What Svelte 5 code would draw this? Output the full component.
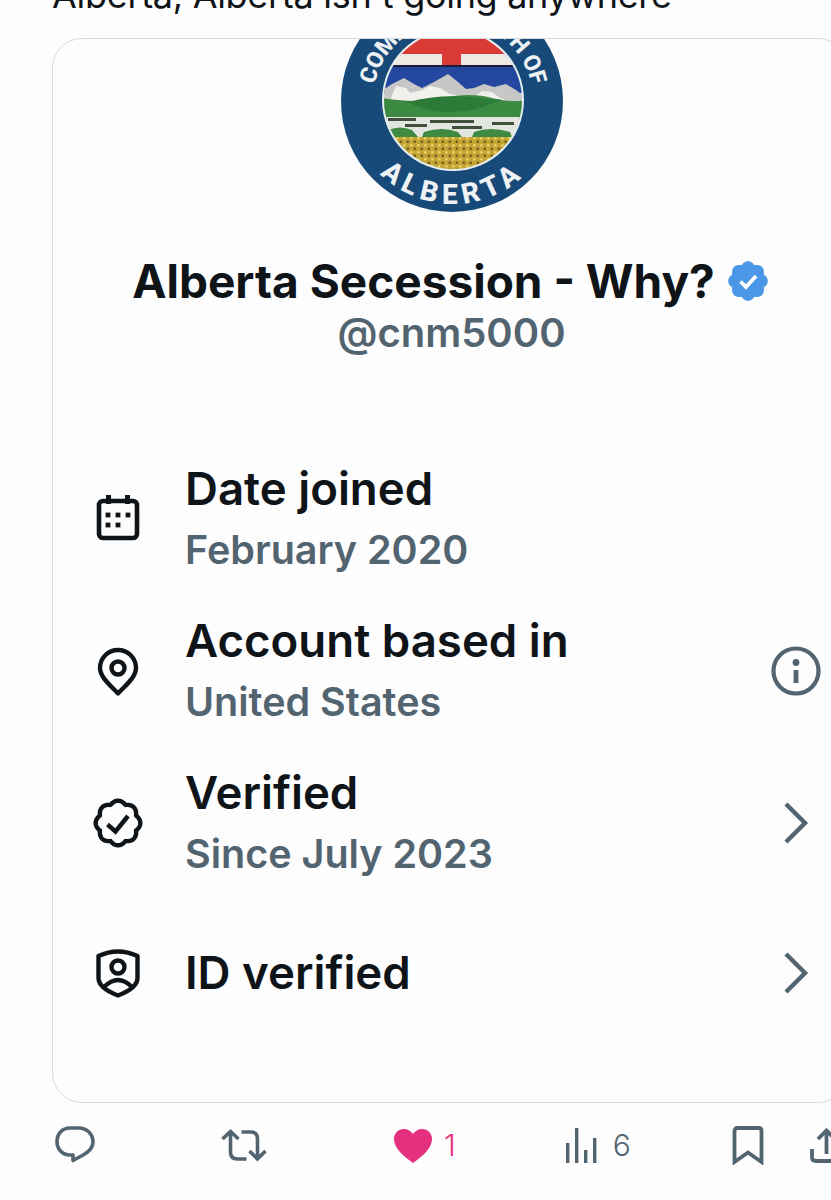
<script>
  function scallop(cx, cy, R, a, n) {
    const pts = [];
    for (let i = 0; i < 320; i++) {
      const t = (i / 320) * Math.PI * 2;
      const r = R + a * Math.abs(Math.cos((n / 2) * t));
      pts.push((cx + r * Math.sin(t)).toFixed(2) + ' ' + (cy - r * Math.cos(t)).toFixed(2));
    }
    return 'M' + pts.join('L') + 'Z';
  }
  const rows = [
    { icon: 'cal', title: 'Date joined', sub: 'February 2020' },
    { icon: 'pin', title: 'Account based in', sub: 'United States', end: 'info' },
    { icon: 'badge', title: 'Verified', sub: 'Since July 2023', end: 'chev' },
    { icon: 'shield', title: 'ID verified', end: 'chev' }
  ];
  const dots = [[-10, -4], [0, -4], [10, -4], [-10, 6], [0, 6]];
</script>

<div class="page">
  <p class="lead">Alberta, Alberta isn't going anywhere</p>

  <section class="card">
    <svg class="logo" width="224" height="224" viewBox="341 -11 224 224">
      <defs>
        <clipPath id="inner"><circle cx="453" cy="100" r="69" /></clipPath>
        <path id="topArc" d="M373 101a80 80 0 0 1 160 0" />
        <path id="botArc" d="M350 101a103 103 0 0 0 206 0" />
        <pattern id="field" width="7" height="7" patternUnits="userSpaceOnUse">
          <rect width="7" height="7" fill="#c4a534" />
          <circle cx="1.800" cy="1.800" r="1.300" fill="#6a5820" />
          <circle cx="5.300" cy="5.300" r="1.300" fill="#e8d66a" />
        </pattern>
      </defs>
      <circle cx="452" cy="101" r="111" fill="#174a78" />
      <circle cx="453" cy="100" r="71" fill="#e8eef0" />
      <g clip-path="url(#inner)">
        <rect x="380" y="28" width="146" height="28" fill="#d93a35" />
        <rect x="380" y="54" width="146" height="11" fill="#efeae4" />
        <rect x="442" y="28" width="19" height="37" fill="#d93a35" />
        <rect x="380" y="65" width="146" height="2" fill="#1c1c3c" />
        <rect x="380" y="67" width="146" height="26" fill="#24479f" />
        <path d="M380 92l12-8 12-6 10 6 8 4 12-6 14-8 10 8 8 7 8-1 10-4 10 3 12-3 10 6 8 6v14H380Z" fill="#c6c7c6" />
        <path d="M396 86l10 2 4 5 12-3 8-4 10 2 10 6 14 3 10 0 8-6 10 1 8 6 8 3-8 6H420l-30-4 2-8Z" fill="#f1f0ed" />
        <path d="M380 98q40 6 62 0 30-6 50 0 20 5 34 2v20H380Z" fill="#3c8a41" />
        <path d="M408 102q30-8 62-5 24 4 32 2-30 15-58 13-22-2-36-10Z" fill="#2c7a37" />
        <rect x="380" y="117" width="146" height="21" fill="#e3e6e0" />
        <path d="M388 118h28v3h-28ZM430 120h44v3h-44ZM405 124h22v3h-22ZM452 126h30v3h-30ZM492 122h22v3h-22Z" fill="#3f4f3a" />
        <path d="M388 130q12-5 24 0l6 7h-32ZM424 132q18-6 34 0l4 5h-40ZM474 132q16-6 36 0l2 5h-40Z" fill="#3f8a42" />
        <rect x="380" y="137" width="146" height="36" fill="url(#field)" />
      </g>
      <text class="seal top"><textPath href="#topArc" startOffset="50%" text-anchor="middle">COMMONWEALTH OF</textPath></text>
      <text class="seal bot"><textPath href="#botArc" startOffset="50%" text-anchor="middle">ALBERTA</textPath></text>
    </svg>

    <div class="name">
      <span>Alberta Secession - Why?</span>
      <svg width="40" height="40" viewBox="0 0 40 40">
        <path d={scallop(20, 20, 17, 2.800, 8)} fill="#4a97e8" />
        <path d="M12.500 20.500l5.500 5.500 10-11" fill="none" stroke="#fff" stroke-width="3.800" />
      </svg>
    </div>
    <div class="handle">@cnm5000</div>

    <ul class="rows">
      {#each rows as r}
        <li class="row">
          <span class="ico">
            {#if r.icon === 'cal'}
              <svg width="44" height="48" viewBox="-22 -24 44 48" fill="none" stroke="#0f1419" stroke-width="4.600">
                <rect x="-19" y="-18" width="38" height="37" rx="4" />
                <path d="M-9.500-24v9M9.500-24v9" stroke-width="5" />
                {#each dots as d}
                  <rect x={d[0] - 2.400} y={d[1] - 2.400} width="4.800" height="4.800" fill="#0f1419" stroke="none" />
                {/each}
              </svg>
            {:else if r.icon === 'pin'}
              <svg width="44" height="50" viewBox="-22 -25 44 50" fill="none" stroke="#0f1419" stroke-width="4.400">
                <path d="M0 22.500C-8 14-18 6-18-3a18 18 0 0 1 36 0C18 6 8 14 0 22.500Z" stroke-linejoin="round" />
                <circle cx="0" cy="-3" r="6.500" />
              </svg>
            {:else if r.icon === 'badge'}
              <svg width="52" height="52" viewBox="0 0 52 52" fill="none" stroke="#0f1419" stroke-width="4.400">
                <path d={scallop(26, 26, 19.500, 2.800, 8)} stroke-linejoin="round" />
                <path d="M15.500 27.500l8 7 12.500-15.500" />
              </svg>
            {:else}
              <svg width="46" height="50" viewBox="0 0 46 50" fill="none" stroke="#0f1419" stroke-width="4.400">
                <path d="M3.500 8Q23-1 42.500 8V30Q42.500 40 23 47.500 3.500 40 3.500 30Z" stroke-linejoin="round" />
                <circle cx="23" cy="19" r="6.500" />
                <path d="M9 39Q23 25 37 39" />
              </svg>
            {/if}
          </span>
          <span class="txt">
            <b>{r.title}</b>
            {#if r.sub}<em>{r.sub}</em>{/if}
          </span>
          {#if r.end === 'info'}
            <svg class="info" width="50" height="50" viewBox="0 0 50 50" fill="none" stroke="#536471" stroke-width="4.200">
              <circle cx="25" cy="25" r="22.500" />
              <circle cx="25" cy="16.500" r="3.400" fill="#536471" stroke="none" />
              <rect x="22.600" y="24" width="4.800" height="13" fill="#536471" stroke="none" />
            </svg>
          {:else if r.end === 'chev'}
            <svg class="chev" width="26" height="44" viewBox="0 0 26 44" fill="none" stroke="#536471" stroke-width="4.400">
              <path d="M3 3l19 19L3 41" />
            </svg>
          {/if}
        </li>
      {/each}
    </ul>
  </section>

  <div class="actions">
    <svg class="a-comment" width="40" height="38" viewBox="0 0 40 38" fill="none" stroke="#536471" stroke-width="3.600">
      <path d="M15 2h9a14 14 0 0 1 14 14c0 6-4 9.500-9 12.500L18 34.500V29h-3C7 29 2 23 2 15.500S7 2 15 2Z" stroke-linejoin="round" />
    </svg>
    <svg class="a-rt" width="46" height="33" viewBox="0 0 46 33" fill="none" stroke="#536471" stroke-width="3.600">
      <path d="M1.500 10L9.500 2.500 17.500 10M9.500 3v20q0 7 7 7h9" />
      <path d="M44.500 22l-8 8-8-8M36.500 30V9.500q0-6.500-7-6.500h-9" />
    </svg>
    <svg class="a-heart" width="40" height="35" viewBox="0 0 40 35" fill="#e5307f">
      <path d="M20 35C10 28 1 20 1 11 1 5 5.500 1 11 1c4 0 7 2 9 5 2-3 5-5 9-5 5.500 0 10 4 10 10 0 9-9 17-19 24Z" />
    </svg>
    <span class="count pink">1</span>
    <svg class="a-bars" width="31" height="35" viewBox="0 0 31 35" fill="#536471">
      <rect x="0" y="15" width="3.400" height="20" /><rect x="9" y="0" width="3.400" height="35" /><rect x="18" y="22" width="3.400" height="13" /><rect x="27" y="10" width="3.400" height="25" />
    </svg>
    <span class="count six">6</span>
    <svg class="a-book" width="32" height="39" viewBox="0 0 32 39" fill="none" stroke="#536471" stroke-width="3.800">
      <path d="M2.500 36V5q0-3 3-3h21q3 0 3 3v31L16 26.500Z" />
    </svg>
    <svg class="a-share" width="40" height="35" viewBox="0 0 40 35" fill="none" stroke="#536471" stroke-width="3.800">
      <path d="M8 11L16.500 2.500 25 11M16.500 3v23" />
      <path d="M2 21v8q0 4 4 4h30" />
    </svg>
  </div>
</div>

<style>
  :global(body) { background: #fdfdfd; }
  .page {
    width: 831px;
    height: 1200px;
    overflow: hidden;
    background: #fdfdfd;
    font-family: Inter, "Liberation Sans", sans-serif;
    color: #0f1419;
  }
  .lead {
    margin: -30px 0 0;
    height: 68px;
    padding-left: 52px;
    font-size: 36px;
    letter-spacing: -0.300px;
    line-height: 50px;
    white-space: nowrap;
    box-sizing: border-box;
  }
  .card {
    margin-left: 52px;
    width: 796px;
    height: 1065px;
    box-sizing: border-box;
    border: 1px solid #d8dcdf;
    border-radius: 30px;
    overflow: hidden;
  }
  .logo {
    display: block;
    margin: -50px 0 0 288px;
  }
  .seal {
    fill: #eef2f4;
    font-weight: 800;
    font-family: "Roboto", "Liberation Sans", sans-serif;
  }
  .top { font-size: 23px; letter-spacing: -0.600px; }
  .bot { font-size: 28px; letter-spacing: 6px; }
  .name {
    display: flex;
    justify-content: center;
    align-items: center;
    gap: 13px;
    margin-top: 40px;
    height: 56px;
    font-size: 46px;
    font-weight: 700;
    white-space: nowrap;
  }
  .name svg { flex: none; }
  .handle {
    text-align: center;
    height: 48px;
    line-height: 48px;
    padding-left: 3px;
    font-size: 40px;
    font-weight: 600;
    color: #536471;
  }
  .rows {
    list-style: none;
    margin: 86px 0 0;
    padding: 0 26px 0 32px;
  }
  .row {
    display: flex;
    align-items: center;
    height: 152px;
  }
  .row:last-child { height: 147px; }
  .ico {
    flex: none;
    width: 66px;
    display: flex;
    justify-content: center;
  }
  .txt {
    display: flex;
    flex-direction: column;
    gap: 7px;
    margin-left: 34px;
  }
  .txt b {
    font-size: 45.600px;
    line-height: 54px;
    font-weight: 600;
  }
  .txt em {
    font-style: normal;
    font-size: 39.500px;
    line-height: 54px;
    font-weight: 600;
    color: #536471;
  }
  .info { margin-left: auto; }
  .chev { margin-left: auto; margin-right: 12px; }
  .actions {
    display: flex;
    align-items: center;
    height: 84px;
    padding-left: 55px;
  }
  .actions svg { flex: none; }
  .a-rt { margin-left: 126px; }
  .a-heart { margin-left: 126px; }
  .a-bars { margin-left: 110px; }
  .a-book { margin-left: 101px; }
  .a-share { margin-left: 46px; }
  .count {
    margin-left: 11px;
    font-size: 30px;
    font-weight: 300;
    color: #536471;
  }
  .six { margin-left: 16px; }
  .pink { color: #e5307f; }
</style>
